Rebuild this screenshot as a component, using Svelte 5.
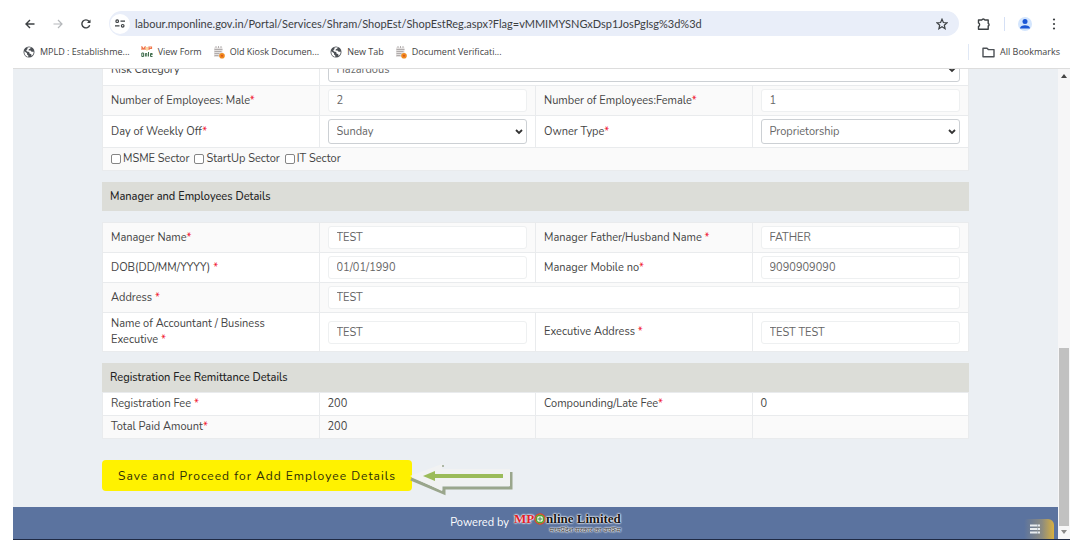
<script lang="ts">
  type Field = {
    id: string;
    label: string;
    value: string;
    kind?: "text" | "select" | "plain";
    wide?: boolean;
  };

  const generalRows: Field[][] = [
    [{ id: "risk", label: "Risk Category", value: "Hazardous", kind: "select", wide: true }],
    [
      { id: "male", label: "Number of Employees: Male*", value: "2" },
      { id: "female", label: "Number of Employees:Female*", value: "1" },
    ],
    [
      { id: "weekly-off", label: "Day of Weekly Off*", value: "Sunday", kind: "select" },
      { id: "owner", label: "Owner Type*", value: "Proprietorship", kind: "select" },
    ],
  ];

  const managerRows: Field[][] = [
    [
      { id: "manager", label: "Manager Name*", value: "TEST" },
      { id: "father", label: "Manager Father/Husband Name *", value: "FATHER" },
    ],
    [
      { id: "dob", label: "DOB(DD/MM/YYYY) *", value: "01/01/1990" },
      { id: "mobile", label: "Manager Mobile no*", value: "9090909090" },
    ],
    [{ id: "address", label: "Address *", value: "TEST", wide: true }],
    [
      { id: "accountant", label: "Name of Accountant / Business Executive *", value: "TEST" },
      { id: "exec-address", label: "Executive Address *", value: "TEST TEST" },
    ],
  ];

  const feeRows: Field[][] = [
    [
      { id: "fee", label: "Registration Fee *", value: "200", kind: "plain" },
      { id: "late-fee", label: "Compounding/Late Fee*", value: "0", kind: "plain" },
    ],
    [
      { id: "total", label: "Total Paid Amount*", value: "200", kind: "plain" },
      { id: "blank", label: "", value: "", kind: "plain" },
    ],
  ];

  const sectors = ["MSME Sector", "StartUp Sector", "IT Sector"];

  const bookmarks = [
    { icon: "globe", title: "MPLD : Establishme..." },
    { icon: "online", title: "View Form" },
    { icon: "doc", title: "Old Kiosk Documen..." },
    { icon: "globe", title: "New Tab" },
    { icon: "doc", title: "Document Verificati..." },
  ];

  let url = $state(
    "labour.mponline.gov.in/Portal/Services/Shram/ShopEst/ShopEstReg.aspx?Flag=vMMIMYSNGxDsp1JosPgIsg%3d%3d"
  );
</script>

{#snippet bookmarkIcon(name: string)}
  {#if name === "globe"}
    <svg width="12" height="12" viewBox="0 0 12 12" aria-hidden="true">
      <circle cx="6" cy="6" r="5.5" fill="#4d5156" />
      <path d="M1.4 5.2 4 7.2v1.4l1.300 1v1.200C3 10.600 1.100 8.500 1.400 5.200Z" fill="#fff" />
      <path d="M4.600 1.500 7.600 1.300 7.400 2.600 5.800 3.300 5.600 4.400H7.500L8.600 5.800H10.700C10.600 8 9.600 9.400 8.500 10L8.300 8.300 6.500 7.600 6.200 6 4 5.400 3.200 4.300 4.400 3.200Z" fill="#fff" />
    </svg>
  {:else if name === "online"}
    <svg width="12" height="12" viewBox="0 0 12 12" aria-hidden="true">
      <path d="M1 4V1l1.500 2L4 1v3M8 4V1h2.500v1.500H8" fill="none" stroke="#f0764a" stroke-width="1.200" />
      <path d="M6 1v3.500" stroke="#f5b13c" />
      <path d="M.8 7h1.800v3.500H.8ZM4.400 10.500V7.500H5.800V10.500M7.500 6v4.500M9.500 8.700h1.700V7.500H9.500v3h2" fill="none" stroke="#3f6d4c" />
    </svg>
  {:else}
    <svg width="12" height="13" viewBox="0 0 12 13" aria-hidden="true">
      <path d="M1 1.500h8.500V11H1Z" fill="#e4e1e0" />
      <path d="M3 0v2M5.500 0v2M8 0v2M1.500 3.500h8M1.500 5.500h7M1.500 7.500h5M1.500 9.500h4" stroke="#a39e9e" stroke-width=".8" />
      <circle cx="9" cy="9.800" r="2.800" fill="#f08a1d" />
      <circle cx="9" cy="9.800" r="1" fill="#d9531b" />
    </svg>
  {/if}
{/snippet}

{#snippet labelText(text: string)}
  {text.replace("*", "")}{#if text.endsWith("*")}<span class="required">*</span>{/if}
{/snippet}

{#snippet fieldRows(rows: Field[][])}
  {#each rows as row}
    <tr>
      {#each row as field (field.id)}
        <td>
          {#if field.kind === "plain"}
            {@render labelText(field.label)}
          {:else}
            <label for={field.id}>{@render labelText(field.label)}</label>
          {/if}
        </td>
        <td colspan={field.wide ? 3 : 1}>
          {#if field.kind === "plain"}
            {field.value}
          {:else if field.kind === "select"}
            <div class="select">
              <select id={field.id}>
                <option>{field.value}</option>
              </select>
              <svg width="8" height="6" viewBox="0 0 8 6" aria-hidden="true">
                <path d="m1 1 3 3 3-3" fill="none" stroke="#333" stroke-width="1.800" />
              </svg>
            </div>
          {:else}
            <input class="text" id={field.id} type="text" value={field.value} />
          {/if}
        </td>
      {/each}
    </tr>
  {/each}
{/snippet}

<div class="window">
  <header>
    <div class="toolbar">
      <button aria-label="Back">
        <svg width="10" height="10" viewBox="0 0 10 10"><path d="M9.500 5H1M5 1 1 5l4 4" fill="none" stroke="#3c4043" stroke-width="1.400" /></svg>
      </button>
      <button aria-label="Forward">
        <svg width="10" height="10" viewBox="0 0 10 10"><path d="M.5 5H9M5 1l4 4-4 4" fill="none" stroke="#b5b8bb" stroke-width="1.200" /></svg>
      </button>
      <button aria-label="Reload">
        <svg width="10" height="10" viewBox="0 0 10 10"><path d="M8.700 6.200A4 4 0 1 1 8 2.300L8.800 3.300" fill="none" stroke="#3c4043" stroke-width="1.400" /><path d="M9.500.5V4H6Z" fill="#3c4043" /></svg>
      </button>
      <div class="omnibox">
        <button class="site-info" aria-label="View site information">
          <svg width="10" height="9" viewBox="0 0 10 9"><path d="M5.500 2.200H10M0 6.800h4.500" stroke="#3c4043" stroke-width="1.300" /><circle cx="2.200" cy="2.200" r="1.300" fill="none" stroke="#3c4043" stroke-width="1.200" /><circle cx="7.700" cy="6.800" r="1.300" fill="none" stroke="#3c4043" stroke-width="1.200" /></svg>
        </button>
        <input type="text" aria-label="Address bar" bind:value={url} />
        <button aria-label="Bookmark this tab">
          <svg width="12" height="12" viewBox="0 0 12 12"><path d="m6 1.200 1.400 3.300 3.600.3-2.700 2.400.8 3.500L6 8.800l-3.100 1.900.8-3.500L1 4.800l3.600-.3Z" fill="none" stroke="#3c4043" stroke-width="1.200" /></svg>
        </button>
      </div>
      <div class="actions">
        <button aria-label="Extensions">
          <svg width="14" height="14" viewBox="0 0 14 14"><path d="M1.500 3h3.300a1.600 1.600 0 0 1 3 0h3.400v3.300a1.500 1.500 0 0 1 0 2.700v3.200H1.500V9.500a2 2 0 0 0 0-3.600Z" fill="none" stroke="#3c4043" stroke-width="1.400" stroke-linejoin="round" /></svg>
        </button>
        <span class="divider"></span>
        <button class="profile" aria-label="Profile">
          <svg width="14" height="14" viewBox="0 0 14 14"><circle cx="7" cy="4.500" r="2.500" fill="#1a56d6" /><path d="M2 11.500c0-4.200 10-4.200 10 0Z" fill="#1a56d6" /></svg>
        </button>
        <button aria-label="Menu">
          <svg width="4" height="12" viewBox="0 0 4 12"><circle cx="2" cy="1.500" r="1.100" fill="#3c4043" /><circle cx="2" cy="6" r="1.100" fill="#3c4043" /><circle cx="2" cy="10.500" r="1.100" fill="#3c4043" /></svg>
        </button>
      </div>
    </div>
    <nav>
      {#each bookmarks as bookmark}
        <a href="#top">{@render bookmarkIcon(bookmark.icon)}{bookmark.title}</a>
      {/each}
      <a class="all" href="#top">
        <svg width="13" height="11" viewBox="0 0 13 11" aria-hidden="true"><path d="M1 1.200h4l1.300 1.400H12v7.200H1Z" fill="none" stroke="#4d5156" stroke-width="1.400" stroke-linejoin="round" /></svg>
        All Bookmarks
      </a>
    </nav>
  </header>

  <div class="viewport">
    <div class="page">
      <main>
        <table class="scrolled">
          <tbody>
            {@render fieldRows(generalRows)}
            <tr>
              <td colspan="4">
                <div class="sectors">
                  {#each sectors as sector}
                    <label><input type="checkbox" />{sector}</label>
                  {/each}
                </div>
              </td>
            </tr>
          </tbody>
        </table>

        <h2>Manager and Employees Details</h2>
        <table class="manager">
          <tbody>{@render fieldRows(managerRows)}</tbody>
        </table>

        <h2>Registration Fee Remittance Details</h2>
        <table>
          <tbody>{@render fieldRows(feeRows)}</tbody>
        </table>

        <div class="submit">
          <button>Save and Proceed for Add Employee Details</button>
          <svg class="pointer" width="106" height="34" viewBox="0 0 106 34" aria-hidden="true">
            <path d="M1 16 34 30v-5h67V9" fill="none" stroke="#9aa68c" stroke-width="3" />
            <path d="M0 13 32 1v5h68v17H32v5Z" fill="#f1f2f2" />
            <path d="M24 13h69" stroke="#9bbb59" stroke-width="4" />
            <path d="m13 13 12-5v10Z" fill="#9bbb59" />
            <circle cx="33" cy="3" r="1" fill="#9aa68c" />
          </svg>
        </div>
      </main>
      <footer>
        <span>Powered by</span>
        <div class="logo">
          <div class="brand">
            <span class="mp">MP</span><svg width="12" height="12" viewBox="0 0 12 12" aria-hidden="true"><circle cx="6" cy="6" r="5" fill="#e9f5dc" stroke="#e8402a" stroke-width="1.500" /><circle cx="6" cy="6" r="3.800" fill="none" stroke="#55a630" stroke-width="1.500" /><path d="M3.500 6h5M6 3.500v5" stroke="#3f8f5a" /></svg>nline Limited
          </div>
          <div class="tagline">मध्यप्रदेश सरकार का उपक्रम</div>
        </div>
        <button class="chat" aria-label="Open menu">
          <svg width="12" height="10" viewBox="0 0 12 10"><path d="M1 1.500h10M1 5h10M1 8.500h10" stroke="#e8ecef" stroke-width="2" /><path d="M8.500 0v10" stroke="#8d9aa8" stroke-width=".6" /></svg>
        </button>
      </footer>
    </div>
    <div class="scrollbar">
      <svg width="6" height="4" viewBox="0 0 6 4"><path d="m0 4 3-4 3 4Z" fill="#444" /></svg>
      <div class="track"><div class="thumb"></div></div>
      <svg width="6" height="4" viewBox="0 0 6 4"><path d="m0 0 3 4 3-4Z" fill="#888" /></svg>
    </div>
  </div>
</div>

<style>
  :global(body) {
    background: #fff;
  }
  .window {
    padding: 6px 20px 14px 13px;
    color: #444;
    font-family: Nunito, Lato, sans-serif;
    font-size: 11px;
    line-height: 16px;
  }
  button,
  input,
  select {
    box-sizing: border-box;
    margin: 0;
    padding: 0;
    border: 0;
    background: none;
    color: inherit;
    font: inherit;
  }
  button {
    display: flex;
    align-items: center;
    justify-content: center;
    cursor: pointer;
  }
  header {
    border-bottom: 1px solid #ddd;
    font-family: "Open Sans", "Noto Sans", sans-serif;
  }
  .toolbar {
    display: flex;
    align-items: center;
    padding: 5px 14px 0 12px;
    gap: 18px;
  }
  .omnibox {
    display: flex;
    flex: 1;
    align-items: center;
    height: 25px;
    padding: 0 11px 0 1px;
    border-radius: 13px;
    background: #e9eef9;
  }
  .omnibox input {
    flex: 1;
    min-width: 0;
    margin-left: 5px;
    color: #3c4043;
    font-family: Lato, sans-serif;
    font-size: 11px;
  }
  .site-info {
    width: 20px;
    height: 20px;
    border-radius: 50%;
    background: #fff;
  }
  .actions {
    display: flex;
    align-items: center;
    gap: 13px;
  }
  .divider {
    width: 1px;
    height: 14px;
    background: #d5e0f5;
  }
  .profile {
    margin-right: 7px;
    border-radius: 50%;
    background: #d3e5fd;
  }
  nav {
    display: flex;
    align-items: center;
    gap: 11px;
    height: 32px;
    padding: 0 10px;
    font-size: 9px;
  }
  nav a {
    display: flex;
    align-items: center;
    gap: 5px;
    color: #444;
    text-decoration: none;
    white-space: nowrap;
  }
  .all {
    margin-left: auto;
    padding-left: 13px;
    border-left: 1px solid #e0e8f5;
  }
  .viewport {
    display: flex;
    overflow: hidden;
    border-bottom: 1px solid #1f2a44;
  }
  .page {
    flex: 1;
    min-width: 0;
    background: #ebeff3;
  }
  main {
    padding: 0 89px 16px;
  }
  table {
    width: 100%;
    border-collapse: collapse;
    table-layout: fixed;
    background: #fff;
  }
  /* the top row sits partly under the toolbar */
  .scrolled {
    margin-top: -16px;
  }
  td {
    padding: 3px 8px;
    border: 1px solid #e9ebed;
  }
  td label {
    display: block;
  }
  tr:nth-child(even) {
    background: #fafafa;
  }
  .manager tr:nth-child(even) {
    background: #fff;
  }
  .manager tr:nth-child(odd) {
    background: #fafafa;
  }
  .required {
    color: #f0142f;
  }
  .text,
  select {
    display: block;
    width: 100%;
    height: 23px;
    padding: 0 8px;
    border: 1px solid #eef0f1;
    border-radius: 3px;
    background: #fff;
    color: #666;
  }
  .select {
    position: relative;
  }
  select {
    height: 25px;
    border-color: #ccd0d4;
    appearance: none;
  }
  .select svg {
    position: absolute;
    top: 10px;
    right: 4px;
  }
  .sectors {
    display: flex;
    gap: 5px;
  }
  .sectors label {
    display: flex;
    align-items: center;
    gap: 2px;
  }
  .sectors input {
    width: 10px;
    height: 10px;
    border: 1px solid #858585;
    border-radius: 2px;
    background: #fff;
    appearance: none;
  }
  h2 {
    margin: 11px 0 0;
    padding: 7px 8px 6px;
    background: #dcddd8;
    color: #222;
    font-size: 11px;
    font-weight: 500;
    line-height: 16px;
  }
  .manager {
    margin-top: 11px;
  }
  .submit {
    display: flex;
    position: relative;
    margin-top: 21px;
  }
  .submit button {
    height: 31px;
    padding: 0 16px;
    border-radius: 4px;
    background: #fff200;
    color: #2c2c08;
    font-size: 12px;
    letter-spacing: 1px;
  }
  .pointer {
    position: absolute;
    top: 3px;
    left: 308px;
  }
  footer {
    display: flex;
    position: relative;
    align-items: center;
    justify-content: center;
    gap: 5px;
    height: 32px;
    background: #5b739f;
    color: #fff;
  }
  .logo {
    color: #151515;
    font-family: "Liberation Serif", serif;
    text-shadow: 0 0 2px #fff, 0 0 2px #fff, 0 0 2px #fff;
  }
  .brand {
    display: flex;
    align-items: center;
    font-size: 13px;
    font-weight: bold;
    line-height: 14px;
  }
  .mp {
    color: #e0202a;
  }
  .tagline {
    color: #444;
    font-family: "Noto Sans", sans-serif;
    font-size: 7px;
    line-height: 8px;
    text-align: right;
  }
  .chat {
    position: absolute;
    right: 4px;
    bottom: 0;
    width: 30px;
    height: 20px;
    padding-right: 8px;
    border-radius: 4px 6px 0 0;
    background: linear-gradient(90deg, #5b739f, #8c8b80 60%, #d8b040);
  }
  .scrollbar {
    display: flex;
    flex-direction: column;
    align-items: center;
    width: 12px;
    padding: 5px 0;
    background: #f6f6f7;
  }
  .track {
    display: flex;
    flex: 1;
    flex-direction: column;
    justify-content: flex-end;
    width: 100%;
    padding: 4px 0;
  }
  .thumb {
    height: 40%;
    margin: 0 1px;
    background: #c1c1c1;
  }
</style>
